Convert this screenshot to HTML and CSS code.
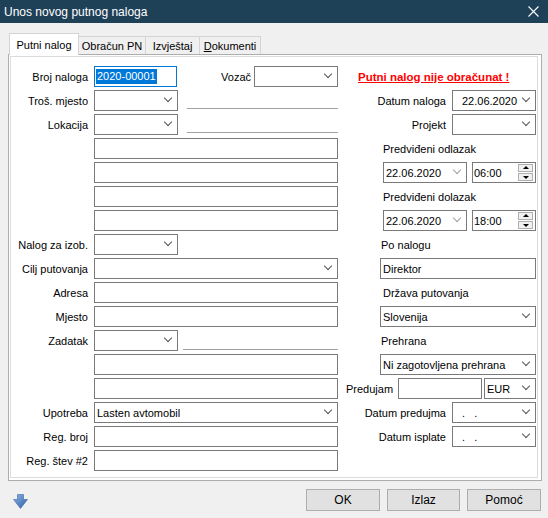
FILE: index.html
```html
<!DOCTYPE html>
<html lang="hr">
<head>
    <meta charset="UTF-8">
    <title>Unos novog putnog naloga</title>
    <link rel="stylesheet" href="styles.css">
</head>
<body>
    <div class="window">
        <div class="titlebar">
            <span>Unos novog putnog naloga</span>
            <svg class="close" width="11" height="11" viewBox="0 0 11 11">
                <path d="M0.5 0.5 L10.5 10.5 M10.5 0.5 L0.5 10.5" stroke="#fff" stroke-width="1.1" fill="none"/>
            </svg>
        </div>

        <div class="main">
            <!-- Tabs -->
            <div class="tabs">
                <div class="tab active">Putni nalog</div>
                <div class="tab t-obracun">Obračun PN</div>
                <div class="tab t-izvjestaj">Izvještaj</div>
                <div class="tab t-dokumenti"><u>D</u>okumenti</div>
            </div>

            <div class="panel">
                <div class="panel-inner">
                    <!-- Left column -->
                    <div class="col left">
                        <div class="row">
                            <label class="lbl">Broj naloga</label>
                            <div class="field w83 focus"><span class="sel">2020-00001</span></div>
                            <span class="inline-lbl">Vozač</span>
                            <div class="field combo w84"></div>
                        </div>
                        <div class="row">
                            <label class="lbl">Troš. mjesto</label>
                            <div class="field combo w84"></div>
                            <div class="underline ul-wide"></div>
                        </div>
                        <div class="row">
                            <label class="lbl">Lokacija</label>
                            <div class="field combo w84"></div>
                            <div class="underline ul-wide"></div>
                        </div>
                        <div class="row"><label class="lbl"></label><div class="field w244"></div></div>
                        <div class="row"><label class="lbl"></label><div class="field w244"></div></div>
                        <div class="row"><label class="lbl"></label><div class="field w244"></div></div>
                        <div class="row"><label class="lbl"></label><div class="field w244"></div></div>
                        <div class="row">
                            <label class="lbl">Nalog za izob.</label>
                            <div class="field combo w84"></div>
                        </div>
                        <div class="row">
                            <label class="lbl">Cilj putovanja</label>
                            <div class="field combo w244"></div>
                        </div>
                        <div class="row"><label class="lbl">Adresa</label><div class="field w244"></div></div>
                        <div class="row"><label class="lbl">Mjesto</label><div class="field w244"></div></div>
                        <div class="row">
                            <label class="lbl">Zadatak</label>
                            <div class="field combo w84"></div>
                            <div class="underline ul-task"></div>
                        </div>
                        <div class="row"><label class="lbl"></label><div class="field w244"></div></div>
                        <div class="row"><label class="lbl"></label><div class="field w244"></div></div>
                        <div class="row">
                            <label class="lbl">Upotreba</label>
                            <div class="field combo w244">Lasten avtomobil</div>
                        </div>
                        <div class="row"><label class="lbl">Reg. broj</label><div class="field w244"></div></div>
                        <div class="row"><label class="lbl">Reg. štev #2</label><div class="field w244"></div></div>
                    </div>

                    <!-- Right column -->
                    <div class="col right">
                        <div class="row"><span class="warning">Putni nalog nije obračunat !</span></div>
                        <div class="row">
                            <span class="rlbl">Datum naloga</span>
                            <div class="field combo date w84">22.06.2020</div>
                        </div>
                        <div class="row">
                            <span class="rlbl">Projekt</span>
                            <div class="field combo w84"></div>
                        </div>
                        <div class="row caption">Predviđeni odlazak</div>
                        <div class="row indent">
                            <div class="field combo light w84">22.06.2020</div>
                            <div class="field time">
                                <span class="time-val">06:00</span>
                                <div class="spin"><span class="up"></span><span class="down"></span></div>
                            </div>
                        </div>
                        <div class="row caption">Predviđeni dolazak</div>
                        <div class="row indent">
                            <div class="field combo light w84">22.06.2020</div>
                            <div class="field time">
                                <span class="time-val">18:00</span>
                                <div class="spin"><span class="up"></span><span class="down"></span></div>
                            </div>
                        </div>
                        <div class="row caption c-near">Po nalogu</div>
                        <div class="row"><div class="field wide">Direktor</div></div>
                        <div class="row caption">Država putovanja</div>
                        <div class="row"><div class="field combo wide">Slovenija</div></div>
                        <div class="row caption c-near">Prehrana</div>
                        <div class="row"><div class="field combo wide">Ni zagotovljena prehrana</div></div>
                        <div class="row">
                            <span class="plbl">Predujam</span>
                            <div class="field w84"></div>
                            <div class="field combo w52">EUR</div>
                        </div>
                        <div class="row">
                            <span class="rlbl">Datum predujma</span>
                            <div class="field combo date w84"><span class="dots">.   .</span></div>
                        </div>
                        <div class="row">
                            <span class="rlbl">Datum isplate</span>
                            <div class="field combo date w84"><span class="dots">.   .</span></div>
                        </div>
                    </div>
                </div>
            </div>
        </div>

        <!-- Footer -->
        <div class="footer">
            <svg class="arrow" width="15" height="15" viewBox="0 0 15 15">
                <defs>
                    <linearGradient id="ag" x1="0" y1="0" x2="1" y2="1">
                        <stop offset="0" stop-color="#8fb4e6"/>
                        <stop offset="1" stop-color="#2d5ea6"/>
                    </linearGradient>
                </defs>
                <path d="M4.5 0.5 H10.5 V5.5 H14.5 L7.5 14.5 L0.5 5.5 H4.5 Z" fill="url(#ag)" stroke="#3a66a8" stroke-width="0.6"/>
            </svg>
            <div class="buttons">
                <button class="btn">OK</button>
                <button class="btn narrow">Izlaz</button>
                <button class="btn">Pomoć</button>
            </div>
        </div>
    </div>
</body>
</html>
```

FILE: styles.css
```css
* {
    box-sizing: border-box;
}

body {
    margin: 0;
    background-color: #f0f0f0;
    font-family: "Liberation Sans", Arial, sans-serif;
    font-size: 11px;
    color: #000;
}

.window {
    width: 548px;
    height: 518px;
    display: flex;
    flex-direction: column;
}

.titlebar {
    height: 23px;
    background-color: #1f4157;
    color: #fff;
    font-size: 12px;
    display: flex;
    align-items: center;
    justify-content: space-between;
    padding: 0 9px 0 4px;
}

.main {
    padding: 10px 0 0 8px;
}

/* Tabs */
.tabs {
    display: flex;
    align-items: flex-end;
    padding-left: 1px;
    margin-bottom: -1px;
    position: relative;
}

.tab {
    height: 18px;
    margin-bottom: 1px;
    border: 1px solid #d4d4d4;
    border-left: none;
    border-bottom: none;
    background-color: #f0f0f0;
    display: flex;
    align-items: center;
    justify-content: center;
    padding: 0;
}

.tab.active {
    width: 70px;
    height: 22px;
    margin-bottom: 0;
    background-color: #fff;
    border-left: 1px solid #d4d4d4;
}

.t-obracun { width: 67px; }
.t-izvjestaj { width: 54px; }
.t-dokumenti { width: 61px; }

/* Panel */
.panel {
    width: 534px;
    height: 427px;
    border: 1px solid #adadad;
    background-color: #fff;
    padding: 1px 3px 2px 1px;
}

.panel-inner {
    height: 100%;
    border: 1px solid #dcdcdc;
    padding-top: 9px;
    display: flex;
    gap: 8px;
}

.col {
    display: flex;
    flex-direction: column;
    gap: 3px;
}

.col.left {
    width: 327px;
}

.col.right {
    width: 190px;
}

.row {
    height: 21px;
    display: flex;
    align-items: center;
}

.lbl {
    width: 77px;
    margin-right: 6px;
    text-align: right;
    flex: none;
}

.inline-lbl {
    flex: 1;
    text-align: right;
    margin-right: 3px;
}

/* Fields */
.field {
    height: 21px;
    border: 1px solid #7a7a7a;
    background-color: #fff;
    padding: 0 2px;
    display: flex;
    align-items: center;
    white-space: nowrap;
    flex: none;
}

.field.focus {
    border-color: #0078d7;
    padding-left: 1px;
}

.sel {
    background-color: #0078d7;
    color: #fff;
    line-height: 15px;
    padding: 0 1px;
}

.w83 { width: 83px; }
.w84 { width: 84px; }
.w52 { width: 52px; margin-left: 2px; }
.w244 { width: 244px; }
.wide { width: 156px; margin-left: 34px; }

.combo {
    position: relative;
    padding-right: 16px;
}

.combo::after {
    content: "";
    position: absolute;
    right: 6px;
    top: 4px;
    width: 5px;
    height: 5px;
    border-right: 1px solid #555;
    border-bottom: 1px solid #555;
    transform: rotate(45deg);
}

.combo.light::after {
    border-color: #a0a0a0;
}

.combo.date {
    padding-left: 9px;
}

.dots {
    white-space: pre;
}

.underline {
    align-self: flex-start;
    height: 19px;
    border-bottom: 1px solid #a0a0a0;
}

.ul-wide {
    width: 151px;
    margin-left: 9px;
}

.ul-task {
    width: 155px;
    margin-left: 5px;
    height: 20px;
}

/* Right column */
.warning {
    padding-left: 12px;
    color: #ff0000;
    font-weight: bold;
    font-size: 11.5px;
    text-decoration: underline;
}

.rlbl {
    flex: 1;
    text-align: right;
    margin-right: 6px;
}

.caption {
    padding-left: 37px;
}

.caption.c-near {
    padding-left: 35px;
}

.indent {
    padding-left: 37px;
    gap: 5px;
}

.time {
    width: 64px;
    padding: 0 2px 0 1px;
    justify-content: space-between;
}

.spin {
    display: flex;
    flex-direction: column;
    gap: 1px;
}

.spin span {
    width: 15px;
    height: 8px;
    border: 1px solid #b0b0b0;
    background-color: #f0f0f0;
    position: relative;
}

.spin .up::after,
.spin .down::after {
    content: "";
    position: absolute;
    left: 4px;
    border-left: 3px solid transparent;
    border-right: 3px solid transparent;
}

.spin .up::after {
    top: 1px;
    border-bottom: 3px solid #000;
}

.spin .down::after {
    top: 2px;
    border-top: 3px solid #000;
}

.plbl {
    width: 52px;
    flex: none;
}

/* Footer */
.footer {
    display: flex;
    align-items: flex-start;
    padding: 8px 7px 0 13px;
}

.arrow {
    margin-top: 5px;
}

.buttons {
    margin-left: auto;
    display: flex;
    gap: 7px;
}

.btn {
    width: 74px;
    height: 22px;
    background-color: #e1e1e1;
    border: 1px solid #adadad;
    font-family: "Liberation Sans", Arial, sans-serif;
    font-size: 12px;
    color: #000;
    padding: 0;
}

.btn.narrow {
    width: 73px;
}
```
